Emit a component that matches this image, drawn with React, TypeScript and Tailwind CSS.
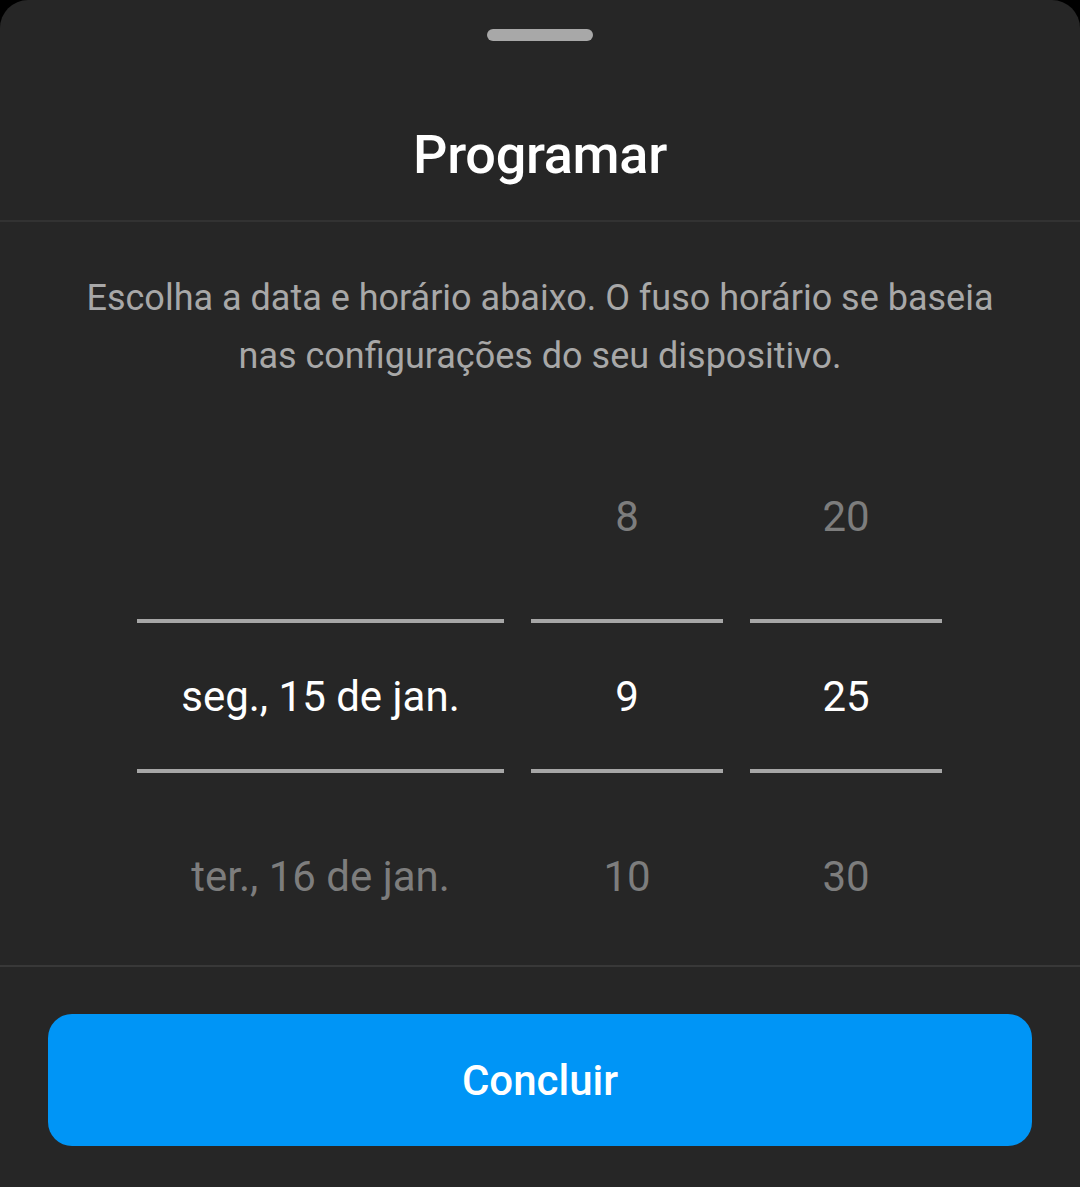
import React from "react";

const font = { fontFamily: "Roboto, 'Noto Sans', sans-serif" };

function Column({
  width,
  top,
  mid,
  bottom,
}: {
  width: string;
  top: string;
  mid: string;
  bottom: string;
}) {
  return (
    <div className={`flex flex-col ${width}`}>
      <div className="h-[180px] flex items-center justify-center text-[42px] text-[#7d7d7d]">
        {top}
      </div>
      <div className="my-[13px] h-[154px] border-y-4 border-[#a6a6a6] flex items-center justify-center text-[42px] text-white">
        {mid}
      </div>
      <div className="h-[180px] flex items-center justify-center text-[42px] text-[#7d7d7d]">
        {bottom}
      </div>
    </div>
  );
}

export default function App() {
  return (
    <div className="w-[1080px] h-[1187px] bg-black" style={font}>
      <div className="h-full bg-[#262626] rounded-t-[28px] flex flex-col">
        <div className="h-[222px] border-b-2 border-[#323232] flex flex-col items-center">
          <div className="mt-[29px] w-[106px] h-[12px] rounded-full bg-[#a8a8a8]" />
          <div className="mt-[84px] h-[60px] leading-[60px] text-[54px] font-medium text-white tracking-[-0.3px]">
            Programar
          </div>
        </div>
        <div className="pt-[47px] pb-[41px] text-center text-[36px] leading-[58px] text-[#a8a8a8] whitespace-nowrap">
          Escolha a data e horário abaixo. O fuso horário se baseia
          <br />
          nas configurações do seu dispositivo.
        </div>
        <div className="flex gap-[27px] pl-[137px]">
          <Column width="w-[367px]" top="" mid="seg., 15 de jan." bottom="ter., 16 de jan." />
          <Column width="w-[192px]" top="8" mid="9" bottom="10" />
          <Column width="w-[192px]" top="20" mid="25" bottom="30" />
        </div>
        <div className="-mt-[1px] border-t-2 border-[#383838] pt-[47px] px-[48px]">
          <button className="w-full h-[132px] rounded-[24px] bg-[#0095f6] text-white text-[42px] font-medium flex items-center justify-center">
            Concluir
          </button>
        </div>
      </div>
    </div>
  );
}
